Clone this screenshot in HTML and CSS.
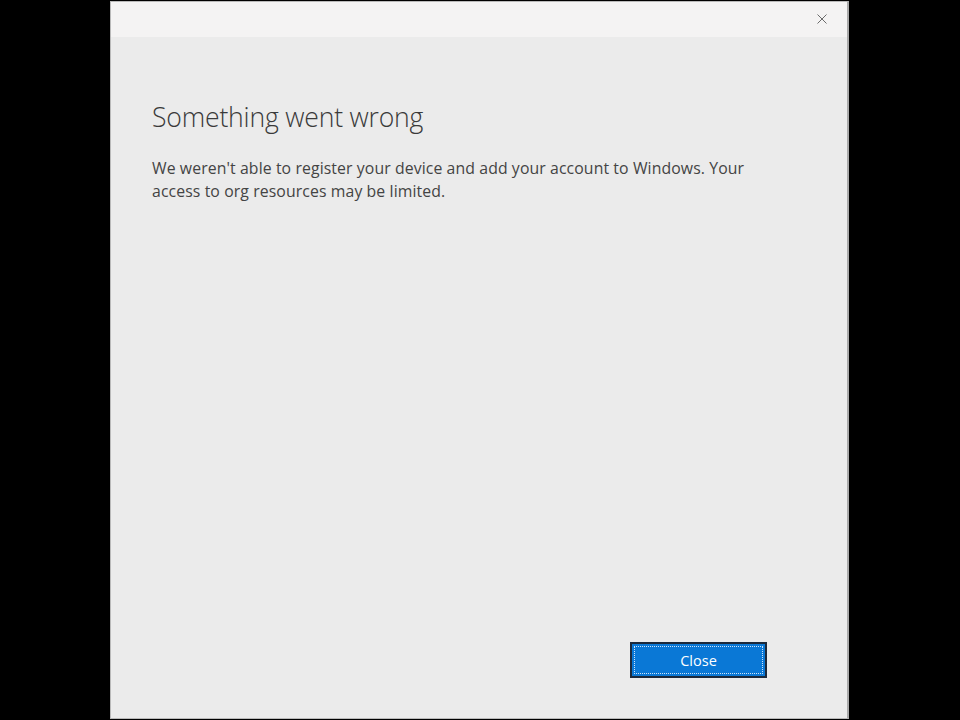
FILE: index.html
```html
<!DOCTYPE html>
<html>
<head>
<meta charset="utf-8">
<link rel="stylesheet" href="styles.css">
</head>
<body>
<div class="window">
  <div class="titlebar">
    <span class="close-x">
      <svg width="10" height="10" viewBox="0 0 10 10"><path d="M0.5 0.5 L9.5 9.5 M9.5 0.5 L0.5 9.5" stroke="#6b6b6b" stroke-width="1"/></svg>
    </span>
  </div>
  <div class="content">
    <h1 class="title">Something went wrong</h1>
    <p class="message">We weren't able to register your device and add your account to Windows. Your access to org resources may be limited.</p>
    <div class="spacer"></div>
    <div class="actions">
      <button class="btn-primary"><span class="btn-label">Close</span></button>
    </div>
  </div>
</div>
</body>
</html>
```

FILE: styles.css
```css
html, body {
  margin: 0;
  padding: 0;
  background: #000;
  height: 720px;
  overflow: hidden;
}
body {
  display: flex;
  justify-content: flex-start;
  padding-left: 110px;
  font-family: "Open Sans", "Liberation Sans", sans-serif;
}
.window {
  width: 736px;
  height: 716px;
  margin-top: 1px;
  background: #ebebeb;
  border: 1px solid #b9b9b9;
  border-right: 2px solid #a9a9a9;
  display: flex;
  flex-direction: column;
}
.titlebar {
  height: 35px;
  background: #f4f3f3;
  display: flex;
  justify-content: flex-end;
  align-items: center;
  padding-right: 20px;
}
.close-x {
  display: flex;
  margin-top: -1px;
}
.content {
  flex: 1;
  display: flex;
  flex-direction: column;
  padding: 0 0 40px 41px;
}
.title {
  margin: 62px 0 0 0;
  font-weight: 300;
  font-size: 26.6px;
  line-height: 36px;
  color: #3a3a3a;
  letter-spacing: -0.2px;
}
.message {
  margin: 22px 0 0 0;
  width: 612px;
  font-size: 15.8px;
  line-height: 23px;
  letter-spacing: 0.1px;
  color: #444;
}
.spacer { flex: 1; }
.actions {
  display: flex;
  justify-content: flex-end;
  padding-right: 80px;
}
.btn-primary {
  width: 137px;
  height: 36px;
  background: #0a78d6;
  border: 2px solid #1c2a3c;
  padding: 2px;
  display: flex;
  cursor: pointer;
}
.btn-label {
  flex: 1;
  border: 1px dotted #cfe4f7;
  color: #fff;
  font-family: "Open Sans", "Liberation Sans", sans-serif;
  font-size: 14.5px;
  display: flex;
  align-items: center;
  justify-content: center;
}
```
